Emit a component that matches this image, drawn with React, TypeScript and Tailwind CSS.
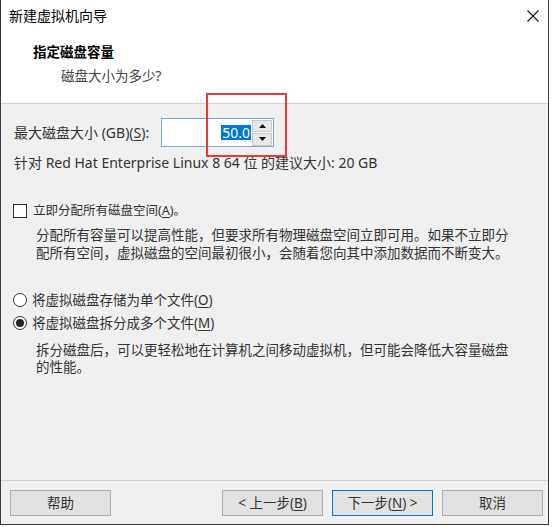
import React from 'react';

const font = "font-['Noto_Sans','Noto_Sans_CJK_SC',sans-serif]";

function Key({ k }: { k: string }) {
  return (
    <>
      (<span className="underline underline-offset-2">{k}</span>)
    </>
  );
}

function Button({ children, focused }: { children: React.ReactNode; focused?: boolean }) {
  return (
    <div
      className={
        'flex h-[26px] w-[101px] items-center justify-center bg-[#e1e1e1] text-[13.5px] text-[#333] border ' +
        (focused ? 'border-[#0078d7] outline outline-1 outline-[#e1e1e1] -outline-offset-2' : 'border-[#adadad]')
      }
    >
      {children}
    </div>
  );
}

export default function App() {
  return (
    <div className={`w-[553px] h-[527px] bg-white ${font}`}>
      <div className="relative flex h-[525px] w-[549px] flex-col border-x border-b border-[#3a3a3a]">
        {/* Title bar */}
        <div className="flex h-[30px] items-center justify-between bg-white pl-[8px] pr-[9px]">
          <span className="text-[14px] text-black">新建虚拟机向导</span>
          <svg width="12" height="12" viewBox="0 0 12 12" className="mt-[2px]">
            <path d="M0.5 0.5 L11.5 11.5 M11.5 0.5 L0.5 11.5" stroke="#111" strokeWidth="1.1" />
          </svg>
        </div>

        {/* Header */}
        <div className="h-[74px] border-b border-[#d0d0d0] bg-white pl-[32px] pt-[13px]">
          <div className="text-[13.5px] font-bold leading-[18px] text-black">指定磁盘容量</div>
          <div className="mt-[6px] pl-[28px] text-[13.5px] leading-[18px] text-[#444]">磁盘大小为多少?</div>
        </div>

        {/* Body */}
        <div className="flex flex-1 flex-col bg-[#f0f0f0] pl-[12px] text-[13.5px] text-[#333]">
          <div className="mt-[14px] flex h-[29px] items-center">
            <span className="w-[148px] pl-px text-[14px]">
              最大磁盘大小 (GB)<Key k="S" />:
            </span>
            <div className="flex h-[29px] w-[113px] items-center border border-[#7aa7de] bg-white">
              <div className="flex flex-1 justify-end pr-px">
                <span className="bg-[#0078d7] px-px text-[14px] leading-[15px] text-white">50.0</span>
              </div>
              <div className="flex h-[26px] w-[20px] flex-col gap-px mr-px">
                <div className="flex flex-1 items-center justify-center border border-[#c8c8c8] bg-[#e8e8e8]">
                  <svg width="7" height="4" viewBox="0 0 7 4"><path d="M3.5 0 L7 4 L0 4 Z" fill="#111" /></svg>
                </div>
                <div className="flex flex-1 items-center justify-center border border-[#c8c8c8] bg-[#e8e8e8]">
                  <svg width="7" height="4" viewBox="0 0 7 4"><path d="M0 0 L7 0 L3.5 4 Z" fill="#111" /></svg>
                </div>
              </div>
            </div>
          </div>

          <div className="mt-[7px] pl-px text-[14px] leading-[18px]">
            针对 Red Hat Enterprise Linux 8 64 位 的建议大小: 20 GB
          </div>

          <div className="mt-[30px] flex h-[18px] items-center">
            <div className="h-[14px] w-[14px] border border-[#333] bg-white" />
            <span className="ml-[6px] text-[12.5px]">
              立即分配所有磁盘空间<Key k="A" />。
            </span>
          </div>

          <div className="mt-[6px] pl-[23px] leading-[18px]">
            分配所有容量可以提高性能，但要求所有物理磁盘空间立即可用。如果不立即分
            <br />
            配所有空间，虚拟磁盘的空间最初很小，会随着您向其中添加数据而不断变大。
          </div>

          <div className="mt-[29px] flex h-[18px] items-center">
            <div className="h-[14px] w-[14px] rounded-full border border-[#333] bg-white" />
            <span className="ml-[5px]">
              将虚拟磁盘存储为单个文件<Key k="O" />
            </span>
          </div>

          <div className="mt-[5px] flex h-[18px] items-center">
            <div className="flex h-[14px] w-[14px] items-center justify-center rounded-full border border-[#333] bg-white">
              <div className="h-[8px] w-[8px] rounded-full bg-[#222]" />
            </div>
            <span className="ml-[5px]">
              将虚拟磁盘拆分成多个文件<Key k="M" />
            </span>
          </div>

          <div className="mt-[10px] pl-[23px] leading-[17px]">
            拆分磁盘后，可以更轻松地在计算机之间移动虚拟机，但可能会降低大容量磁盘
            <br />
            的性能。
          </div>
        </div>

        {/* Footer */}
        <div className="flex h-[44px] items-start border-t border-[#d0d0d0] bg-[#f0f0f0] pl-[9px] pr-[5px] pt-[9px]">
          <Button>帮助</Button>
          <div className="flex-1" />
          <div className="flex gap-[9px]">
            <Button>
              &lt; 上一步<Key k="B" />
            </Button>
            <Button focused>
              下一步<Key k="N" /> &gt;
            </Button>
            <Button>取消</Button>
          </div>
        </div>

        {/* Red annotation box */}
        <div className="absolute left-[205px] top-[93px] h-[64px] w-[81px] border-2 border-[#e8383d]" />
      </div>
    </div>
  );
}
